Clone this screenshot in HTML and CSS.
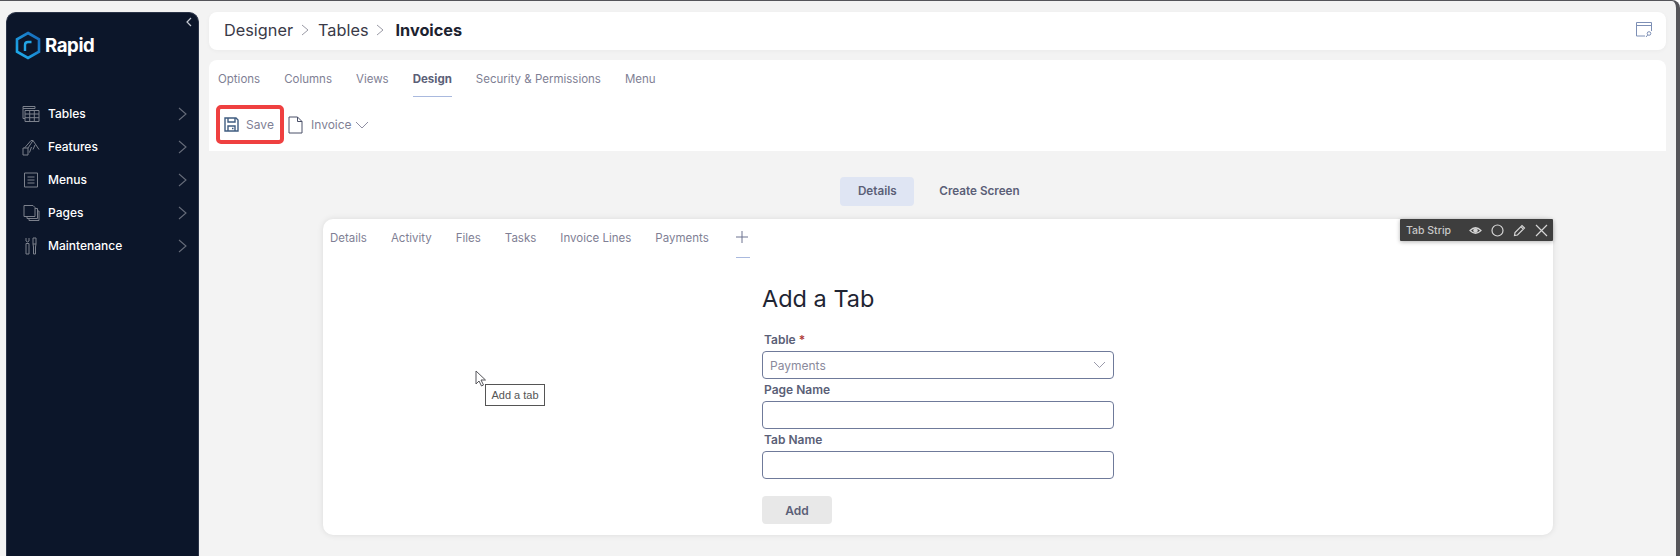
FILE: index.html
```html
<!DOCTYPE html>
<html lang="en">
<head>
  <meta charset="UTF-8" />
  <title>Invoices - Designer</title>
  <link rel="stylesheet" href="styles.css">
</head>
<body>
  <div class="window">

    <aside class="sidebar">
      <svg class="collapse" width="8" height="10" viewBox="0 0 8 10"><path d="M6 1 2 5l4 4" /></svg>
      <div class="logo">
        <svg width="26" height="29" viewBox="0 0 26 29">
          <defs>
            <linearGradient id="hex" x1="0" y1="1" x2="1" y2="0">
              <stop offset="0" stop-color="#1fb0ee" />
              <stop offset="1" stop-color="#1667b8" />
            </linearGradient>
          </defs>
          <path d="M13 2 24 8.300v12.400L13 27 2 20.700V8.300z" fill="none" stroke="url(#hex)" stroke-width="2.600" />
          <path d="M10 20v-6q0-3 3-3h3.500" fill="none" stroke="#24a6e6" stroke-width="2.400" />
        </svg>
        <span>Rapid</span>
      </div>
      <nav class="nav">
        <a class="nav-item">
          <svg class="nav-icon" viewBox="0 0 18 18"><path d="M1 1.500h12v2H1zM1 3.500v10h2M3 5.500h14v11H3zM3 9h14M3 12.700h14M7.700 5.500v11M12.300 5.500v11" /></svg>
          <span>Tables</span>
          <svg class="nav-arrow" viewBox="0 0 9 14"><path d="M1 1l7 6-7 6" /></svg>
        </a>
        <a class="nav-item">
          <svg class="nav-icon" viewBox="0 0 18 18"><path d="M1 17v-7h5v7zM2.500 10 9 2.500h2L6 10M11 2.500l6 9M13 7l-2 4.500M7.500 14.500 9.500 9" /></svg>
          <span>Features</span>
          <svg class="nav-arrow" viewBox="0 0 9 14"><path d="M1 1l7 6-7 6" /></svg>
        </a>
        <a class="nav-item">
          <svg class="nav-icon" viewBox="0 0 18 18"><path d="M2.500 2h13v14h-13zM5.500 6h7M5.500 9h7M5.500 12h7" /></svg>
          <span>Menus</span>
          <svg class="nav-arrow" viewBox="0 0 9 14"><path d="M1 1l7 6-7 6" /></svg>
        </a>
        <a class="nav-item">
          <svg class="nav-icon" viewBox="0 0 18 18"><path d="M2 1.500h9l2 2v9H2zM13 4.500h2.500v10H5v-2M15.500 7H17v9.500H7v-2" /></svg>
          <span>Pages</span>
          <svg class="nav-arrow" viewBox="0 0 9 14"><path d="M1 1l7 6-7 6" /></svg>
        </a>
        <a class="nav-item">
          <svg class="nav-icon" viewBox="0 0 18 18"><path d="M4 1v3l1.500 1L7 4V1M4 6.500h3V17H4zM11 1h3v6h-3zM11 7l.5 3v7h2v-7l.5-3" /></svg>
          <span>Maintenance</span>
          <svg class="nav-arrow" viewBox="0 0 9 14"><path d="M1 1l7 6-7 6" /></svg>
        </a>
      </nav>
    </aside>

    <main class="main">
      <header class="breadcrumb">
        <span>Designer</span>
        <svg class="crumb-sep" viewBox="0 0 9 14"><path d="M1 2l6 5-6 5" /></svg>
        <span>Tables</span>
        <svg class="crumb-sep" viewBox="0 0 9 14"><path d="M1 2l6 5-6 5" /></svg>
        <strong>Invoices</strong>
        <svg class="crumb-icon" viewBox="0 0 16 16">
          <path d="M9 14H.5V.5h15V9M.5 3.500h15" />
          <circle cx="13" cy="11.500" r="1.800" />
          <path d="M11.700 13 10 15" />
        </svg>
      </header>

      <section class="toolbar-card">
        <div class="page-tabs">
          <a>Options</a>
          <a>Columns</a>
          <a>Views</a>
          <a class="active">Design</a>
          <a>Security &amp; Permissions</a>
          <a>Menu</a>
        </div>
        <div class="actions">
          <button class="save-btn">
            <svg width="15" height="15" viewBox="0 0 15 15">
              <path d="M1 1h11l2 2v11H1z" />
              <path d="M4 1v4h7V1M4 14V9h7v5M8 11.500h1.500" />
            </svg>
            Save
          </button>
          <button class="doc-btn">
            <svg width="15" height="18" viewBox="0 0 15 18"><path d="M1 1h8.500L14 5.500V17H1zM9.500 1v4.500H14" /></svg>
            Invoice
            <svg class="chev" width="14" height="8" viewBox="0 0 14 8"><path d="M1 1l6 6 6-6" /></svg>
          </button>
        </div>
      </section>

      <div class="mode-switch">
        <a class="mode selected">Details</a>
        <a class="mode">Create Screen</a>
      </div>

      <section class="canvas">
        <div class="strip-bar">
          <span>Tab Strip</span>
          <svg width="13" height="9" viewBox="0 0 13 9"><path class="eye" d="M1 4.500Q6.500-1 12 4.500 6.500 10 1 4.500z" /><circle cx="6.500" cy="4.500" r="1.700" fill="#d5d5d5" /></svg>
          <svg width="13" height="13" viewBox="0 0 13 13"><circle cx="6.500" cy="6.500" r="5.500" /></svg>
          <svg width="13" height="13" viewBox="0 0 13 13"><path d="M1.500 11.500l.5-3L9 1.500l2.500 2.500-7 7zM7.800 2.700l2.500 2.500" /></svg>
          <svg width="13" height="13" viewBox="0 0 13 13"><path d="M1 1l11 11M12 1 1 12" /></svg>
        </div>

        <div class="inner-tabs">
          <a>Details</a>
          <a>Activity</a>
          <a>Files</a>
          <a>Tasks</a>
          <a>Invoice Lines</a>
          <a>Payments</a>
          <a class="add-tab">
            <svg width="12" height="12" viewBox="0 0 12 12"><path d="M6 0v12M0 6h12" /></svg>
          </a>
        </div>

        <form class="add-form">
          <h2>Add a Tab</h2>
          <label>Table <span class="req">*</span></label>
          <div class="select">
            <span>Payments</span>
            <svg width="13" height="8" viewBox="0 0 13 8"><path d="M1 1l5.500 5.500L12 1" /></svg>
          </div>
          <label>Page Name</label>
          <input type="text" />
          <label>Tab Name</label>
          <input type="text" />
          <button type="button" class="add-btn">Add</button>
        </form>

        <svg class="cursor" width="13" height="18" viewBox="0 0 13 18"><path d="M1 1v13l3-3 2.500 5 2-1-2.500-5h4.500z" /></svg>
        <div class="tip">Add a tab</div>
      </section>
    </main>

  </div>
</body>
</html>
```

FILE: styles.css
```css
* {
  box-sizing: border-box;
}

html, body {
  margin: 0;
  height: 100%;
  overflow: hidden;
}

body {
  font-family: Inter, "Liberation Sans", sans-serif;
  background: #fff;
  color: #6b6b85;
}

svg {
  fill: none;
  flex: none;
}

a {
  display: block;
}

.window {
  display: flex;
  height: 556px;
  gap: 10px;
  padding: 11px 10px 0 6px;
  background: #f3f3f3;
  border-top: 1px solid #55555a;
  border-right: 4px solid #55555a;
  border-top-right-radius: 8px;
}

/* sidebar */
.sidebar {
  position: relative;
  width: 193px;
  flex: none;
  background: #0c162a;
  border: 1px solid #2b3448;
  border-bottom: none;
  border-radius: 10px 10px 0 0;
  color: #fff;
}

.collapse {
  position: absolute;
  top: 4px;
  right: 5px;
  stroke: #c6cad3;
  stroke-width: 1.2;
}

.logo {
  display: flex;
  align-items: center;
  gap: 4px;
  height: 45px;
  padding: 19px 0 0 8px;
  font-size: 18.600px;
  font-weight: 700;
  letter-spacing: -0.4px;
}

.nav {
  padding-top: 39px;
}

.nav-item {
  display: flex;
  align-items: center;
  height: 33px;
  padding: 0 11px 0 15px;
  font-size: 12px;
  font-weight: 500;
}

.nav-item span {
  flex: 1;
  margin-left: 8px;
}

.nav-icon {
  width: 18px;
  height: 18px;
  stroke: #7c818c;
  stroke-width: 1;
}

.nav-arrow {
  width: 9px;
  height: 14px;
  stroke: #666c79;
  stroke-width: 1.1;
}

/* header cards */
.main {
  flex: 1;
  display: flex;
  flex-direction: column;
  padding: 0;
  min-width: 0;
}

.breadcrumb {
  display: flex;
  align-items: center;
  gap: 8px;
  height: 38px;
  padding: 0 14px 2px 15px;
  background: #fff;
  border-radius: 8px;
  box-shadow: 0 1px 4px rgba(0,0,0,0.04);
  font-size: 16.300px;
  color: #3a3a48;
}

.breadcrumb strong {
  margin-left: 2px;
  font-weight: 700;
  color: #1c2230;
}

.crumb-sep {
  width: 9px;
  height: 14px;
  stroke: #9a9aa5;
  stroke-width: 1;
}

.crumb-icon {
  width: 16px;
  height: 16px;
  margin-left: auto;
  stroke: #7d8fb5;
  stroke-width: 1;
}

.toolbar-card {
  height: 91px;
  margin-top: 10px;
  background: #fff;
  border-radius: 8px 8px 0 0;
}

.page-tabs {
  display: flex;
  height: 37px;
  padding: 0 0 0 9px;
  gap: 24px;
  font-size: 11.500px;
  color: #7f7f95;
}

.page-tabs a {
  height: 37px;
  padding-top: 12px;
}

.page-tabs .active {
  font-weight: 700;
  color: #5b5f77;
  border-bottom: 1px solid #a9b9de;
}

.actions {
  display: flex;
  align-items: center;
  gap: 4px;
  margin-top: 8px;
  padding-left: 7px;
}

.actions button {
  display: flex;
  align-items: center;
  background: none;
  padding: 0;
  border: none;
  font: inherit;
  font-size: 12px;
  color: #7f7f95;
}

.save-btn {
  width: 68px;
  height: 39px;
  gap: 7px;
  justify-content: center;
  border: 4px solid #ef4040 !important;
  border-radius: 5px;
}

.save-btn svg {
  margin-left: -2px;
  stroke: #3f5c80;
  stroke-width: 1.4;
}

.doc-btn {
  gap: 8px;
}

.doc-btn svg {
  stroke: #4a5068;
  stroke-width: 1;
}

.doc-btn .chev {
  margin-left: -5px;
  stroke: #8f8fa3;
}

/* details / create switch */
.mode-switch {
  display: flex;
  justify-content: center;
  gap: 9px;
  padding: 26px 0 13px 1px;
  font-size: 11.700px;
  font-weight: 600;
  color: #5b5f77;
}

.mode {
  height: 29px;
  padding: 7px 16px 0;
  border-radius: 4px;
}

.mode.selected {
  width: 74px;
  padding-left: 0;
  padding-right: 0;
  text-align: center;
  background: #dfe5f3;
}

/* design canvas */
.canvas {
  position: relative;
  align-self: flex-start;
  width: 1230px;
  height: 316px;
  margin-left: 114px;
  background: #fff;
  border-radius: 10px;
  box-shadow: 0 0 6px rgba(0,0,0,0.1);
}

.strip-bar {
  position: absolute;
  top: 0;
  right: 0;
  width: 153px;
  height: 22px;
  display: flex;
  align-items: center;
  gap: 9px;
  padding: 0 5px 0 6px;
  background: #3e3e3e;
  border-radius: 1px;
  box-shadow: 0 1px 4px rgba(0,0,0,0.3);
  font-size: 10.500px;
  font-weight: 500;
  color: #c8c8c8;
}

.strip-bar span {
  flex: 1;
}

.strip-bar svg {
  stroke: #d5d5d5;
  stroke-width: 1.2;
}

.inner-tabs {
  display: flex;
  gap: 24px;
  height: 39px;
  padding: 12px 0 0 7px;
  font-size: 11.500px;
  color: #7f7f95;
}

.add-tab {
  width: 14px;
  height: 27px;
  margin-left: 3px;
  border-bottom: 1px solid #a9b9de;
}

.add-tab svg {
  stroke: #6c7390;
  stroke-width: 1;
}

.add-form {
  display: flex;
  flex-direction: column;
  width: 352px;
  margin-left: 439px;
  padding-top: 26px;
}

.add-form h2 {
  margin: 0 0 13px;
  height: 32px;
  font-size: 23.500px;
  font-weight: 400;
  color: #1f2533;
}

.add-form label {
  display: block;
  height: 22px;
  padding: 3px 0 0 2px;
  font-size: 12px;
  font-weight: 600;
  color: #5b5f77;
}

.req {
  color: #b03a3a;
}

.select, .add-form input {
  display: flex;
  align-items: center;
  justify-content: space-between;
  height: 28px;
  padding: 0 7px;
  border: 1px solid #6f7a9a;
  border-radius: 4px;
  background: #fff;
  font-size: 12px;
  color: #8a8a9c;
}

.select svg {
  stroke: #9a9aaa;
  stroke-width: 1;
}

.add-btn {
  width: 70px;
  height: 28px;
  margin-top: 17px;
  background: #e8e8e8;
  border: none;
  border-radius: 4px;
  font: inherit;
  font-size: 12px;
  font-weight: 600;
  color: #5b5f77;
}

/* mouse pointer and native tooltip over the canvas */
.cursor {
  position: absolute;
  left: 152px;
  top: 151px;
  fill: #fff;
  stroke: #55555a;
  stroke-width: 1;
}

.tip {
  position: absolute;
  left: 162px;
  top: 165px;
  width: 60px;
  height: 22px;
  border: 1px solid #555;
  background: #fff;
  font-family: "Liberation Sans", sans-serif;
  font-size: 11px;
  line-height: 20px;
  text-align: center;
  color: #555;
}
```
